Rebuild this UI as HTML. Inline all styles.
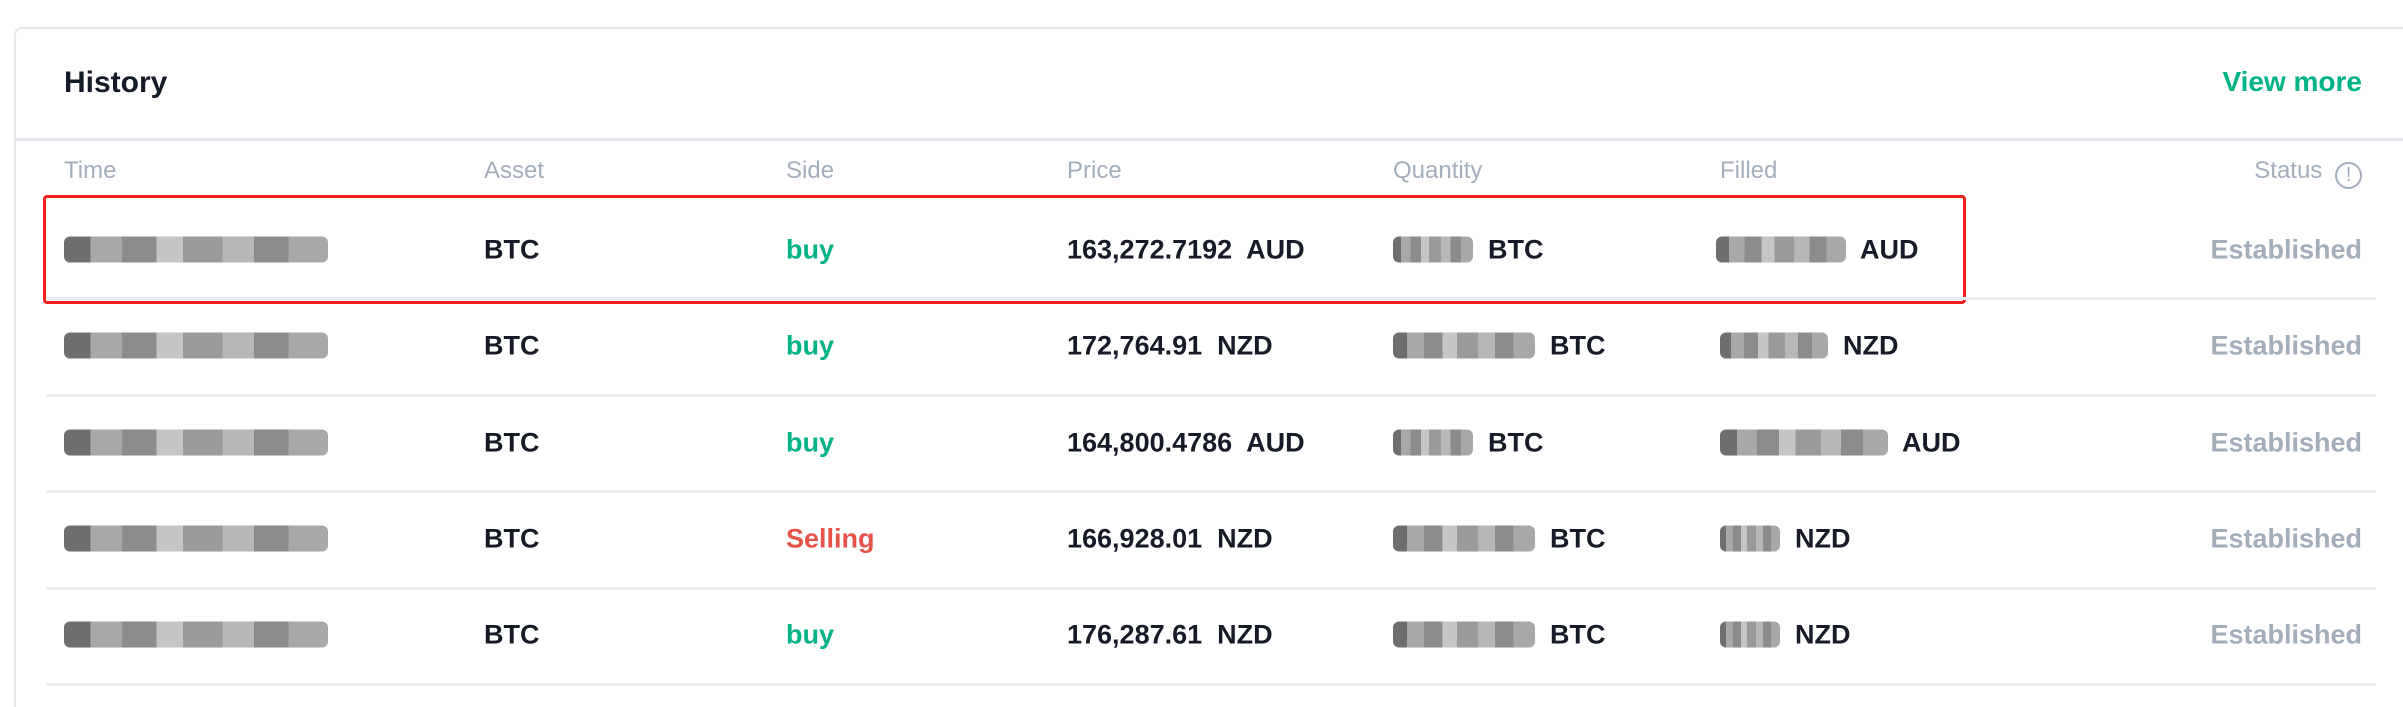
<!DOCTYPE html>
<html style="width:2403px;height:707px;overflow:hidden"><head><meta charset="utf-8"><style>
*{margin:0;padding:0;box-sizing:border-box}
body{width:2403px;height:707px;background:#fff;position:relative;overflow:hidden;font-family:"Liberation Sans",Arial,sans-serif}
.card{position:absolute;left:14px;top:27px;width:2389px;height:680px;border:2px solid #e4e9f0;border-right:none;border-bottom:none;border-radius:8px 0 0 0}
.a{position:absolute;white-space:nowrap}
.h{font-weight:700;font-size:30px;color:#141a26}
.th{font-size:24px;color:#a4aebb;top:157px}
.td{font-size:27px;font-weight:700;color:#161b27;transform:translateY(-50%)}
.g{color:#00b386}.r{color:#e5534b}.s{color:#a4aebb}
.line{position:absolute;left:46px;width:2330px;height:3px;background:#e9edf2}
.blur{display:inline-block;height:26px;vertical-align:-4px;border-radius:6px;background:linear-gradient(90deg,#555 0 10%,#999 10% 22%,#777 22% 35%,#bbb 35% 45%,#888 45% 60%,#aaa 60% 72%,#777 72% 85%,#999 85%);opacity:.85}
</style></head><body>
<div class="card"></div>
<div class="a h" style="left:64px;top:66px">History</div>
<div class="a h g" style="right:41px;top:66px;font-size:28px">View more</div>
<div style="position:absolute;left:16px;top:138px;width:2387px;height:3px;background:#e4e9f0"></div>
<div class="a th" style="left:64px">Time</div>
<div class="a th" style="left:484px">Asset</div>
<div class="a th" style="left:786px">Side</div>
<div class="a th" style="left:1067px">Price</div>
<div class="a th" style="left:1393px">Quantity</div>
<div class="a th" style="left:1720px">Filled</div>
<div class="a th" style="right:41px">Status <span style="display:inline-block;width:27px;height:27px;border:2px solid #a4aebb;border-radius:50%;text-align:center;font-size:20px;line-height:23px;vertical-align:-3px;margin-left:6px">!</span></div>

<div style="position:absolute;left:43px;top:195px;width:1923px;height:109px;border:3px solid #f0201c;border-radius:4px"></div>

<div class="line" style="top:297px"></div>
<div class="line" style="top:394px"></div>
<div class="line" style="top:490px"></div>
<div class="line" style="top:587px"></div>
<div class="line" style="top:683px"></div>

<div class="a td" style="left:64px;top:250px"><span class="blur" style="width:264px"></span></div>
<div class="a td" style="left:484px;top:250px">BTC</div>
<div class="a td g" style="left:786px;top:250px">buy</div>
<div class="a td" style="left:1067px;top:250px">163,272.7192&nbsp; AUD</div>
<div class="a td" style="left:1393px;top:250px"><span class="blur" style="width:80px"></span>&nbsp; BTC</div>
<div class="a td" style="left:1716px;top:250px"><span class="blur" style="width:130px"></span>&nbsp; AUD</div>
<div class="a td s" style="right:41px;top:250px">Established</div>

<div class="a td" style="left:64px;top:346px"><span class="blur" style="width:264px"></span></div>
<div class="a td" style="left:484px;top:346px">BTC</div>
<div class="a td g" style="left:786px;top:346px">buy</div>
<div class="a td" style="left:1067px;top:346px">172,764.91&nbsp; NZD</div>
<div class="a td" style="left:1393px;top:346px"><span class="blur" style="width:142px"></span>&nbsp; BTC</div>
<div class="a td" style="left:1720px;top:346px"><span class="blur" style="width:108px"></span>&nbsp; NZD</div>
<div class="a td s" style="right:41px;top:346px">Established</div>

<div class="a td" style="left:64px;top:443px"><span class="blur" style="width:264px"></span></div>
<div class="a td" style="left:484px;top:443px">BTC</div>
<div class="a td g" style="left:786px;top:443px">buy</div>
<div class="a td" style="left:1067px;top:443px">164,800.4786&nbsp; AUD</div>
<div class="a td" style="left:1393px;top:443px"><span class="blur" style="width:80px"></span>&nbsp; BTC</div>
<div class="a td" style="left:1720px;top:443px"><span class="blur" style="width:168px"></span>&nbsp; AUD</div>
<div class="a td s" style="right:41px;top:443px">Established</div>

<div class="a td" style="left:64px;top:539px"><span class="blur" style="width:264px"></span></div>
<div class="a td" style="left:484px;top:539px">BTC</div>
<div class="a td r" style="left:786px;top:539px">Selling</div>
<div class="a td" style="left:1067px;top:539px">166,928.01&nbsp; NZD</div>
<div class="a td" style="left:1393px;top:539px"><span class="blur" style="width:142px"></span>&nbsp; BTC</div>
<div class="a td" style="left:1720px;top:539px"><span class="blur" style="width:60px"></span>&nbsp; NZD</div>
<div class="a td s" style="right:41px;top:539px">Established</div>

<div class="a td" style="left:64px;top:635px"><span class="blur" style="width:264px"></span></div>
<div class="a td" style="left:484px;top:635px">BTC</div>
<div class="a td g" style="left:786px;top:635px">buy</div>
<div class="a td" style="left:1067px;top:635px">176,287.61&nbsp; NZD</div>
<div class="a td" style="left:1393px;top:635px"><span class="blur" style="width:142px"></span>&nbsp; BTC</div>
<div class="a td" style="left:1720px;top:635px"><span class="blur" style="width:60px"></span>&nbsp; NZD</div>
<div class="a td s" style="right:41px;top:635px">Established</div>
</body></html>
